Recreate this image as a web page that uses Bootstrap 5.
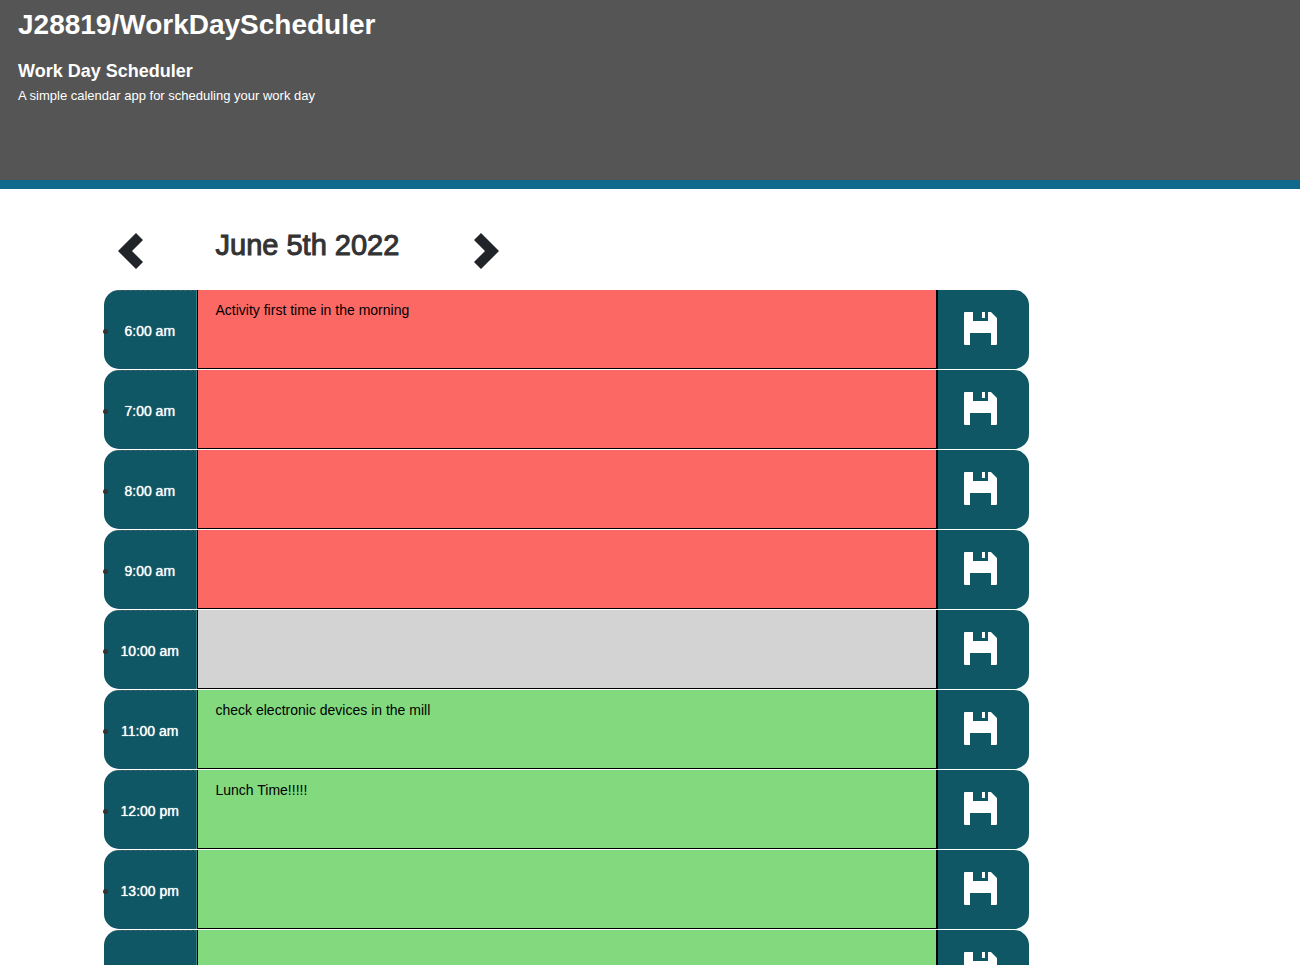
<!DOCTYPE html>
<html lang="en">
<head>
<meta charset="utf-8">
<meta name="viewport" content="width=device-width, initial-scale=1">
<title>Work Day Scheduler</title>
<link href="https://cdn.jsdelivr.net/npm/bootstrap@5.3.0/dist/css/bootstrap.min.css" rel="stylesheet">
<style>
  body { font-family: "Liberation Sans", Arial, sans-serif; font-size: 14px; line-height: 20px; color: #333; background: #fff; }
  .masthead { background: #555; border-bottom: 9px solid #10698c; min-height: 189px; padding: 6px 18px; }
  .masthead h1 { font-size: 28px; line-height: 38px; }
  .masthead h2 { font-size: 18px; line-height: 22px; }
  .masthead p { font-size: 13px; }
  .planner { margin-left: 8%; max-width: 1110px; }
  .day-nav { height: 101px; padding-top: 22px; }
  .day-nav > div { padding-left: 14px; }
  .day-nav > div:last-child { padding-left: 0; }
  .day-nav h3 { font-size: 29px; line-height: 34px; padding: 0 5px 11px; -webkit-text-stroke: 1px #333; }
  .day-nav .btn { line-height: 0; color: #212529; }
  .time-block { height: 79px; margin-bottom: 1px; }
  .hour { background: #0f5764; color: #fff; border-top: 1px dashed #45606a; border-right: 1px solid #3c8088; border-radius: 15px 0 0 15px; padding-top: 2px; }
  .hour::before { content: ""; position: absolute; left: -1px; top: 38px; width: 5px; height: 5px; border-radius: 50%; background: #333; }
  .hour label { text-shadow: 0 0 1px #fff; }
  .entry { resize: none; border: solid #000; border-width: 0 1px 1px; border-radius: 0; color: #000; padding: 10px 18px; outline-offset: -2px; overflow: hidden; }
  .past { background: #fc6864; }
  .present { background: #d3d3d3; }
  .future { background: #83d97e; }
  .save { background: #0f5764; border: 0; border-left: 1px solid #000; border-radius: 0 15px 15px 0; color: #fff; padding: 0 6px 3px 0; }
  .save:hover { background: #146c7c; }
</style>
</head>
<body>
<svg class="d-none" aria-hidden="true">
  <symbol id="floppy" viewBox="0 0 33 33"><path fill="currentColor" fill-rule="evenodd" d="M1 0H9V9H24V0H27L33 6V32Q33 33 32 33H27V21H6V33H1Q0 33 0 32V1Q0 0 1 0ZM18 0H21V6H18Z"/></symbol>
</svg>
<header class="masthead text-white">
  <h1 class="fw-bold mb-0">J28819/WorkDayScheduler</h1>
  <h2 class="fw-bold mb-0 mt-3">Work Day Scheduler</h2>
  <p class="mb-0 mt-1">A simple calendar app for scheduling your work day</p>
</header>
<main class="planner">
  <div class="row g-0 day-nav align-items-center">
    <div class="col-1"><button class="btn p-0 border-0 rounded-0" aria-label="Previous day"><svg width="25" height="36" viewBox="0 0 25 36"><path fill="currentColor" d="M18 0L25 7L14 18L25 29L18 36L0 18Z"/></svg></button></div>
    <div class="col-3"><h3 class="mb-0 text-nowrap">June 5th 2022</h3></div>
    <div class="col-1"><button class="btn p-0 border-0 rounded-0" aria-label="Next day"><svg width="25" height="36" viewBox="0 0 25 36"><path fill="currentColor" d="M7 0L0 7L11 18L0 29L7 36L25 18Z"/></svg></button></div>
  </div>
  <form id="blocks"></form>
</main>
<template id="block">
  <div class="row g-0 time-block">
    <div class="col-1 hour position-relative d-flex align-items-center justify-content-center"><label></label></div>
    <textarea class="col-8 entry h-100" spellcheck="false"></textarea>
    <button type="button" class="col-1 save h-100 d-flex align-items-center justify-content-center"><svg width="33" height="33"><use href="#floppy"/></svg></button>
  </div>
</template>
<script src="https://cdn.jsdelivr.net/npm/bootstrap@5.3.0/dist/js/bootstrap.bundle.min.js"></script>
<script>
  const now = 10;
  const notes = { 6: "Activity first time in the morning", 11: "check electronic devices in the mill", 12: "Lunch Time!!!!!" };
  const list = document.getElementById("blocks");
  for (let h = 6; h <= 14; h++) {
    const row = document.getElementById("block").content.cloneNode(true);
    const label = row.querySelector("label"), entry = row.querySelector("textarea");
    label.textContent = h + ":00 " + (h < 12 ? "am" : "pm");
    label.htmlFor = entry.id = "hour-" + h;
    entry.value = notes[h] || "";
    entry.classList.add(h < now ? "past" : h === now ? "present" : "future");
    row.querySelector("button").setAttribute("aria-label", "Save " + label.textContent);
    list.append(row);
  }
</script>
</body>
</html>
